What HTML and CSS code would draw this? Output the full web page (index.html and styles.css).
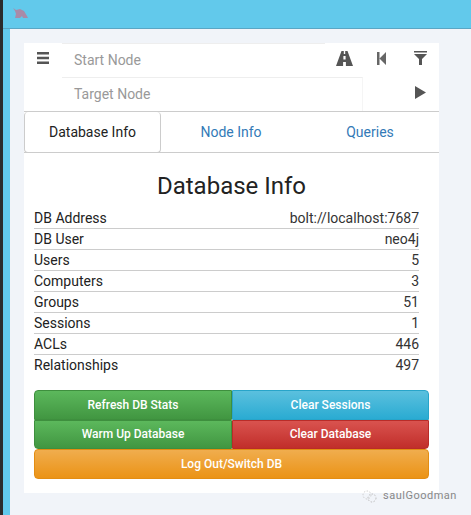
FILE: index.html
```html
<!DOCTYPE html>
<html>
<head>
  <title>BloodHound</title>
  <link rel="stylesheet" href="styles.css">
</head>
<body>
  <div class="topbar">
    <svg class="logo" width="15" height="11" viewBox="0 0 15 11">
      <path d="M0 0 L3 2 L7 1 L11 3 L14 8 L15 10 L10 10 L9 8 L7 10 L2 10 L3 6 L2 3 Z" fill="#a98ba8"/>
    </svg>
  </div>
  <div class="content">
    <div class="panel">
      <div class="search">
        <div class="search-row">
          <div class="cell cell-menu">
            <svg width="12" height="12" viewBox="0 0 12 12"><path d="M0 0h12v2.5H0zM0 4.7h12v2.5H0zM0 9.5h12V12H0z" fill="#555"/></svg>
          </div>
          <div class="field field-start">Start Node</div>
          <div class="cell cell-tools">
            <svg width="17" height="15" viewBox="0 0 17 15"><path d="M5.5 0h2.3v3h1.4V0h2.3L17 15H9.9v-4H7.1v4H0zM7.4 5h2.2v3.5H7.4z" fill="#555" fill-rule="evenodd"/></svg>
            <svg width="9" height="13" viewBox="0 0 9 13"><path d="M0 0h2.5v13H0zM9 0v13L2.5 6.5z" fill="#666"/></svg>
            <svg width="13" height="14" viewBox="0 0 13 14"><path d="M0 0h13v1.5H0zM0 3h13L8 8v6H5V8z" fill="#555"/></svg>
          </div>
        </div>
        <div class="search-row">
          <div class="cell cell-menu"></div>
          <div class="field field-target">Target Node</div>
          <div class="cell cell-play">
            <svg width="11" height="13" viewBox="0 0 11 13"><path d="M0 0l11 6.5L0 13z" fill="#555"/></svg>
          </div>
        </div>
      </div>
      <div class="tabs">
        <div class="tab tab-active">Database Info</div>
        <div class="tab tab-node">Node Info</div>
        <div class="tab tab-queries">Queries</div>
      </div>
      <div class="info">
        <h3>Database Info</h3>
        <div class="row"><span>DB Address</span><span class="value">bolt://localhost:7687</span></div>
        <div class="row"><span>DB User</span><span class="value">neo4j</span></div>
        <div class="row"><span>Users</span><span class="value">5</span></div>
        <div class="row"><span>Computers</span><span class="value">3</span></div>
        <div class="row"><span>Groups</span><span class="value">51</span></div>
        <div class="row"><span>Sessions</span><span class="value">1</span></div>
        <div class="row"><span>ACLs</span><span class="value">446</span></div>
        <div class="row row-last"><span>Relationships</span><span class="value">497</span></div>
        <div class="buttons">
          <div class="btn btn-green btn-tl">Refresh DB Stats</div>
          <div class="btn btn-blue btn-tr">Clear Sessions</div>
          <div class="btn btn-green btn-bl">Warm Up Database</div>
          <div class="btn btn-red btn-br">Clear Database</div>
          <div class="btn btn-orange btn-wide">Log Out/Switch DB</div>
        </div>
      </div>
    </div>
  </div>
  <div class="watermark">
    <svg width="15" height="13" viewBox="0 0 15 13"><circle cx="5" cy="5" r="4" fill="none" stroke="#ccc" stroke-dasharray="1.5 1.5"/><circle cx="10" cy="8" r="4" fill="none" stroke="#bbb" stroke-dasharray="1.5 1.5"/></svg>
    <span>saulGoodman</span>
  </div>
</body>
</html>
```

FILE: styles.css
```css
html, body {
  height: 100%;
}
body {
  margin: 0;
  overflow: hidden;
  font-family: Roboto, Arial, sans-serif;
  font-size: 14px;
  color: #222;
  background-color: #62c9eb;
  border-left: 3px solid #2b2b2b;
}
.topbar {
  height: 29px;
  padding: 8px 0 0 10px;
  box-sizing: border-box;
  border-bottom: 1px solid #5aa6c4;
}
.logo {
  display: block;
}
.content {
  margin-left: 7px;
  padding: 14px 0 0 14px;
  background-color: #f1f4f9;
  height: 486px;
  box-sizing: border-box;
}
.panel {
  width: 415px;
  height: 450px;
  background-color: #fff;
}
.search-row {
  display: flex;
  height: 34px;
}
.cell-menu {
  width: 38px;
  padding: 9px 0 0 13px;
  box-sizing: border-box;
}
.cell svg {
  display: block;
}
.field {
  box-sizing: border-box;
  padding-left: 12px;
  padding-top: 8px;
  color: #999;
  font-size: 14px;
  line-height: 17px;
  border-top: 1px solid #eee;
}
.field-start {
  width: 263px;
}
.field-target {
  width: 301px;
  border-right: 1px solid #f5f5f5;
}
.cell-tools {
  flex: 1;
  display: flex;
  gap: 19px;
  padding: 8px 0 0 11px;
  box-sizing: border-box;
  align-items: flex-start;
}
.cell-tools svg:nth-child(2) {
  margin: 1px 0 0 5px;
}
.cell-tools svg:nth-child(3) {
  margin-left: 9px;
}
.cell-play {
  flex: 1;
  padding: 9px 0 0 52px;
  box-sizing: border-box;
}
.tabs {
  display: flex;
  height: 42px;
  box-sizing: border-box;
  border-top: 1px solid #ccc;
  border-bottom: 1px solid #ccc;
  text-align: center;
  line-height: 40px;
  font-size: 14px;
  color: #337ab7;
}
.tab {
  box-sizing: border-box;
}
.tab-active {
  width: 137px;
  color: #222;
  border: 1px solid #ccc;
  border-top: 0;
  border-radius: 4px;
  margin-bottom: -1px;
}
.tab-node {
  width: 140px;
}
.tab-queries {
  flex: 1;
}
.info {
  padding: 0 10px;
}
h3 {
  margin: 0;
  padding-top: 19px;
  height: 55px;
  box-sizing: border-box;
  font-size: 24px;
  line-height: 28px;
  font-weight: 400;
  text-align: center;
  color: #222;
}
.row {
  display: flex;
  justify-content: space-between;
  height: 21px;
  box-sizing: border-box;
  margin-right: 10px;
  line-height: 20px;
  border-bottom: 1px solid #ccc;
}
.row-last {
  border-bottom: 0;
}
.value {
  color: #333;
}
.buttons {
  display: grid;
  grid-template-columns: 198px 197px;
  margin-top: 14px;
}
.btn {
  height: 30px;
  box-sizing: border-box;
  border: 1px solid;
  color: #fff;
  font-size: 12px;
  font-weight: 500;
  line-height: 28px;
  text-align: center;
}
.btn-green {
  background: linear-gradient(#5cb85c, #419641);
  border-color: #3e8f3e;
}
.btn-blue {
  background: linear-gradient(#5bc0de, #2aabd2);
  border-color: #28a4c9;
}
.btn-red {
  background: linear-gradient(#d9534f, #c12e2a);
  border-color: #b92c28;
}
.btn-orange {
  background: linear-gradient(#f0ad4e, #eb9316);
  border-color: #e38d13;
}
.btn-tl {
  border-radius: 4px 0 0 0;
}
.btn-tr {
  border-radius: 0 4px 0 0;
}
.btn-bl {
  border-radius: 0 0 0 4px;
  height: 29px;
  line-height: 26px;
}
.btn-br {
  border-radius: 0 0 4px 0;
  height: 29px;
  line-height: 26px;
}
.btn-wide {
  grid-column: 1 / 3;
  border-radius: 4px;
}
.watermark {
  position: absolute;
  left: 362px;
  top: 489px;
  display: flex;
  align-items: center;
  gap: 6px;
  font-size: 11px;
  line-height: 14px;
  letter-spacing: 0.5px;
  color: #888;
}
```
